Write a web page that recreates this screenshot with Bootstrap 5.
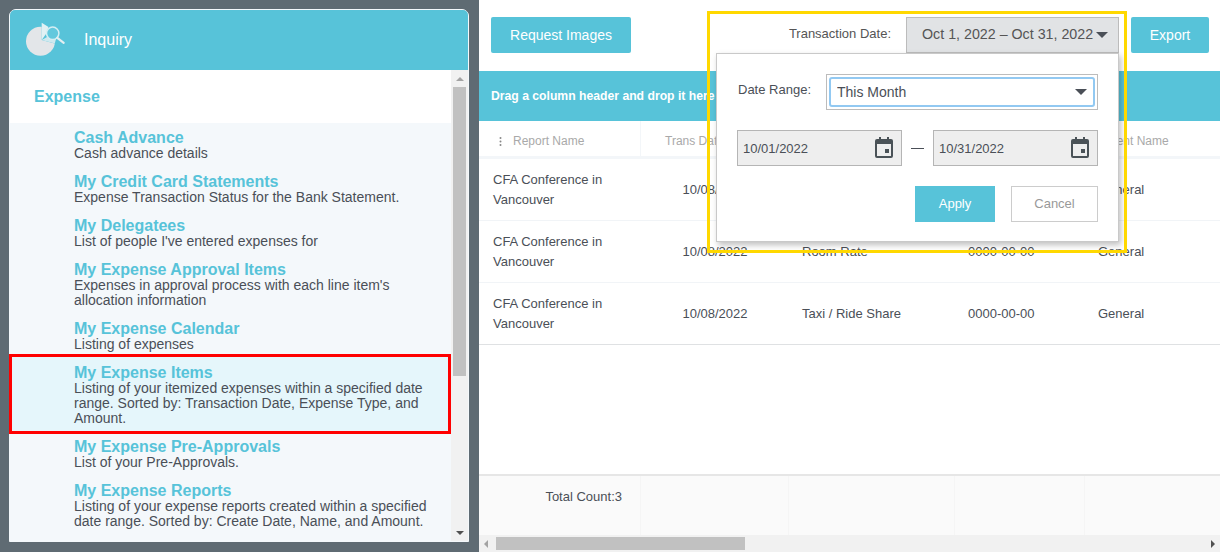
<!DOCTYPE html>
<html lang="en">
<head>
<meta charset="utf-8">
<title>Inquiry</title>
<link href="https://cdn.jsdelivr.net/npm/bootstrap@5.3.0/dist/css/bootstrap.min.css" rel="stylesheet">
<style>
html,body{height:552px;overflow:hidden}
body{background:#5f6b73;font-family:"Liberation Sans",Arial,sans-serif;color:#4a4f57;font-size:14px}
.app-shell{height:552px}
.left-pane{width:479px;padding:9px 10px 10px 9px;flex:none}
.inq-panel{height:533px;border:1px solid #f4f8fb;border-radius:7px 7px 0 0;background:#f4f8fb}
.inq-head{height:60px;background:#57c3d9;color:#fff;font-size:16px;border:0;border-radius:6px 6px 0 0;padding:0 0 0 15px}
.inq-head span{margin-left:17px}
.inq-scroll{min-height:0}
.inq-main{min-width:0;position:relative}
.sec-title{height:53px;background:#fff;color:#57c3d9;font-weight:700;font-size:16px;padding-left:24px}
.menu-item{padding:6px 20px 6px 64px;line-height:15px;font-size:14px;background:transparent;border:0;border-radius:0;color:#4a4f57}
.menu-item b{display:block;color:#57c3d9;font-size:16px;line-height:17px}
.menu-item.is-picked{background:#e5f6fb;border:3px solid #f00;margin:-4px 0 -2px -1px;padding:7px 20px 5px 62px;z-index:2;position:relative}
.vbar{width:17px;background:#f1f1f1;flex:none}
.vbar-end{height:17px}
.vthumb{height:289px;width:13px;background:#c1c1c1;margin:0 auto}
.tri-up,.tri-down,.tri-left,.tri-right{width:0;height:0;border-style:solid;border-color:transparent}
.tri-up{border-width:0 4px 4px;border-bottom-color:#a3a3a3}
.tri-down{border-width:4px 4px 0;border-top-color:#505050}
.tri-left{border-width:4px 4px 4px 0;border-right-color:#a3a3a3}
.tri-right{border-width:4px 0 4px 4px;border-left-color:#505050}
.right-pane{background:#fff;min-width:0}
.top-row{height:71px;padding:17px 11px 0 12px}
.btn-aqua{background:#57c3d9;border:0;color:#fff;border-radius:2px;height:36px;font-size:14px;padding:0;--bs-btn-hover-bg:#57c3d9;--bs-btn-hover-color:#fff}
.btn-req{width:140px}
.btn-exp{width:78px;margin-left:12px}
.lbl-date{font-size:13px;color:#555;margin:0 15px 3px 0}
.date-toggle{width:213px;height:36px;background:#e1e3e5;border:1px solid #bcbcbc;border-radius:0;color:#555;font-size:14.25px;padding:0 10px 0 15px;white-space:nowrap}
.caret-dn{width:0;height:0;border-style:solid;border-width:6px 6px 0;border-color:#4a4f57 transparent transparent;flex:none}
.drag-band{height:50px;background:#57c3d9;color:#fff;font-weight:700;font-size:12.2px;padding-left:12px;white-space:nowrap}
.grid-wrap{overflow:hidden;flex:1 1 auto;min-height:0}
.data-grid{table-layout:fixed;width:741px;margin:0;font-size:13px;color:#4a4f57;border-collapse:separate;border-spacing:0;--bs-table-border-color:#f1f4f7}
.data-grid th{height:38px;font-weight:400;font-size:12px;color:#a9a9a9;padding:4px 14px 0;vertical-align:middle;border-bottom:3px solid #f3f6f9;white-space:nowrap;overflow:hidden}
.data-grid th+th{border-left:1px solid #f3f6f9}
.data-grid td{height:62px;padding:0 14px;line-height:20px;vertical-align:middle;border-bottom:1px solid #f1f4f7}
.data-grid td.cell-date{padding-left:16px;padding-right:14px;text-align:center}
.data-grid tr:last-child td{border-bottom:1px solid #dfe1e3}
.data-grid th.th-first{padding-left:20px}
.data-grid th.th-date{padding-left:24px}
.data-grid th.th-agent{padding-left:17px}
.dots-ico{width:3px;margin-right:11px;vertical-align:-1px}
.foot-row{height:61px;background:#fafafa;border-top:2px solid #e6e6e6;flex:none}
.foot-cell{border-right:1px solid #f5f5f5;flex:none}
.foot-total{width:162px;padding-right:18px;text-align:right;font-size:13px;color:#4a4f57;padding-top:11px}
.hbar{height:17px;background:#f1f1f1;flex:none;padding:0 5px 0 5px}
.hthumb{width:249px;height:13px;background:#c1c1c1;margin-left:8px}
.date-pop{position:absolute;left:237px;top:53px;width:403px;height:189px;background:#fff;border:1px solid #c9c9c9;box-shadow:2px 3px 6px rgba(0,0,0,.25);z-index:3;padding:20px 20px 0 20px}
.pop-label{font-size:13px;color:#4a4f57;width:88px;margin:0 0 4px 1px;flex:none}
.sel-outer{border:1px solid #bcbcbc;padding:2px;width:272px;height:36px;position:relative;flex:none}
.sel-inner{height:30px;border:2px solid #92c9f2;border-radius:3px;font-size:14px;color:#4a4f57;padding:0 6px;background-image:none;box-shadow:none}
.sel-caret{position:absolute;right:10px;top:14px;pointer-events:none}
.date-field{width:165px;height:36px;position:relative;flex:none}
.date-input{height:36px;background:#eee;border:1px solid #b5b5b5;border-radius:0;color:#4a4f57;font-size:13px;padding:0 5px}
.cal-ico{position:absolute;right:9px;top:7px;width:18px;height:21px}
.range-dash{width:13px;height:1px;background:#4a4f57;margin:0 9px;flex:none}
.btn-apply{width:80px;font-size:13px;border-radius:0}
.btn-cancel{width:87px;height:36px;background:#fff;border:1px solid #ccc;border-radius:0;color:#999;font-size:13px;padding:0;margin-left:16px}
.call-out{position:absolute;left:228px;top:11px;width:420px;height:242px;border:3px solid #ffd800;z-index:4;pointer-events:none}
</style>
</head>
<body>
<div class="app-shell d-flex">
  <div class="left-pane">
    <div class="card inq-panel d-flex flex-column">
      <div class="card-header inq-head d-flex align-items-center">
        <svg width="42" height="36" viewBox="0 0 42 36" aria-hidden="true">
          <circle cx="15.5" cy="19.3" r="14.5" fill="#e3e6e9"/>
          <path d="M16.7 18 L16.7 -1 H36 V21.5 H29.5 Z" fill="#57c3d9"/>
          <path d="M16.7 18 L22 15 L31 17 L29.8 21.5 Z" fill="#cfe9ef"/>
          <path d="M16.7 .7 L23.5 5 L21 12 L16.7 18 Z" fill="#e2f1f4"/>
          <circle cx="27.7" cy="11.3" r="6.2" fill="#63c8dd" stroke="#d5eef3" stroke-width="1.5"/>
          <path d="M32.3 15.8 L38.7 20.8" stroke="#e3eef1" stroke-width="2.2" stroke-linecap="round"/>
        </svg>
        <span>Inquiry</span>
      </div>
      <div class="inq-scroll d-flex flex-grow-1">
        <div class="inq-main flex-grow-1">
          <div class="sec-title d-flex align-items-center">Expense</div>
          <div class="list-group list-group-flush">
            <div class="list-group-item menu-item"><b>Cash Advance</b>Cash advance details</div>
            <div class="list-group-item menu-item"><b>My Credit Card Statements</b>Expense Transaction Status for the Bank Statement.</div>
            <div class="list-group-item menu-item"><b>My Delegatees</b>List of people I've entered expenses for</div>
            <div class="list-group-item menu-item"><b>My Expense Approval Items</b>Expenses in approval process with each line item's allocation information</div>
            <div class="list-group-item menu-item"><b>My Expense Calendar</b>Listing of expenses</div>
            <div class="list-group-item menu-item is-picked"><b>My Expense Items</b>Listing of your itemized expenses within a specified date range. Sorted by: Transaction Date, Expense Type, and Amount.</div>
            <div class="list-group-item menu-item"><b>My Expense Pre-Approvals</b>List of your Pre-Approvals.</div>
            <div class="list-group-item menu-item"><b>My Expense Reports</b>Listing of your expense reports created within a specified date range. Sorted by: Create Date, Name, and Amount.</div>
          </div>
        </div>
        <div class="vbar d-flex flex-column">
          <div class="vbar-end d-flex align-items-center justify-content-center"><div class="tri-up"></div></div>
          <div class="vthumb"></div>
          <div class="vbar-end d-flex align-items-center justify-content-center mt-auto"><div class="tri-down"></div></div>
        </div>
      </div>
    </div>
  </div>
  <div class="right-pane flex-grow-1 d-flex flex-column position-relative">
    <div class="top-row d-flex align-items-start flex-none">
      <button type="button" class="btn btn-aqua btn-req">Request Images</button>
      <div class="d-flex align-items-center ms-auto">
        <p class="lbl-date">Transaction Date:</p>
        <button type="button" class="btn date-toggle d-flex align-items-center justify-content-between"><span>Oct 1, 2022 – Oct 31, 2022</span><i class="caret-dn"></i></button>
        <button type="button" class="btn btn-aqua btn-exp">Export</button>
      </div>
    </div>
    <div class="drag-band d-flex align-items-center">Drag a column header and drop it here</div>
    <div class="grid-wrap">
      <table class="table data-grid">
        <colgroup><col style="width:161px"><col style="width:148px"><col style="width:166px"><col style="width:130px"><col style="width:136px"></colgroup>
        <thead><tr>
          <th class="th-first"><svg class="dots-ico" width="3" height="9" viewBox="0 0 3 9" aria-hidden="true"><circle cx="1.5" cy="1" r="1" fill="#888"/><circle cx="1.5" cy="4.5" r="1" fill="#888"/><circle cx="1.5" cy="8" r="1" fill="#888"/></svg>Report Name</th>
          <th class="th-date">Trans Date</th><th>Expense Type</th><th>Post Date</th><th class="th-agent">Agent Name</th>
        </tr></thead>
        <tbody>
          <tr><td>CFA Conference in Vancouver</td><td class="cell-date">10/08/2022</td><td>Airfare</td><td>0000-00-00</td><td>General</td></tr>
          <tr><td>CFA Conference in Vancouver</td><td class="cell-date">10/08/2022</td><td>Room Rate</td><td>0000-00-00</td><td>General</td></tr>
          <tr><td>CFA Conference in Vancouver</td><td class="cell-date">10/08/2022</td><td>Taxi / Ride Share</td><td>0000-00-00</td><td>General</td></tr>
        </tbody>
      </table>
    </div>
    <div class="foot-row d-flex">
      <div class="foot-cell foot-total">Total Count:3</div>
      <div class="foot-cell" style="width:148px"></div>
      <div class="foot-cell" style="width:166px"></div>
      <div class="foot-cell" style="width:130px"></div>
    </div>
    <div class="hbar d-flex align-items-center">
      <div class="tri-left"></div>
      <div class="hthumb"></div>
      <div class="tri-right ms-auto"></div>
    </div>

    <div class="date-pop">
      <div class="d-flex align-items-center">
        <label class="pop-label" for="rangeSel">Date Range:</label>
        <div class="sel-outer">
          <select id="rangeSel" class="form-select sel-inner"><option>This Month</option></select>
          <i class="caret-dn sel-caret"></i>
        </div>
      </div>
      <div class="d-flex align-items-center" style="margin-top:20px">
        <div class="date-field">
          <input class="form-control date-input" value="10/01/2022" aria-label="Start date">
          <svg class="cal-ico" viewBox="0 0 18 21" aria-hidden="true"><path fill="#4a5257" d="M4 0h2v2h6V0h2v2h2a2 2 0 0 1 2 2v15a2 2 0 0 1-2 2H2a2 2 0 0 1-2-2V4a2 2 0 0 1 2-2h2zM2 7v12h14V7zM10 12h4v4h-4z"/></svg>
        </div>
        <div class="range-dash"></div>
        <div class="date-field">
          <input class="form-control date-input" value="10/31/2022" aria-label="End date">
          <svg class="cal-ico" viewBox="0 0 18 21" aria-hidden="true"><path fill="#4a5257" d="M4 0h2v2h6V0h2v2h2a2 2 0 0 1 2 2v15a2 2 0 0 1-2 2H2a2 2 0 0 1-2-2V4a2 2 0 0 1 2-2h2zM2 7v12h14V7zM10 12h4v4h-4z"/></svg>
        </div>
      </div>
      <div class="d-flex justify-content-end" style="margin-top:20px">
        <button type="button" class="btn btn-aqua btn-apply">Apply</button>
        <button type="button" class="btn btn-cancel">Cancel</button>
      </div>
    </div>
    <div class="call-out"></div>
  </div>
</div>
<script src="https://cdn.jsdelivr.net/npm/bootstrap@5.3.0/dist/js/bootstrap.bundle.min.js"></script>
</body>
</html>
